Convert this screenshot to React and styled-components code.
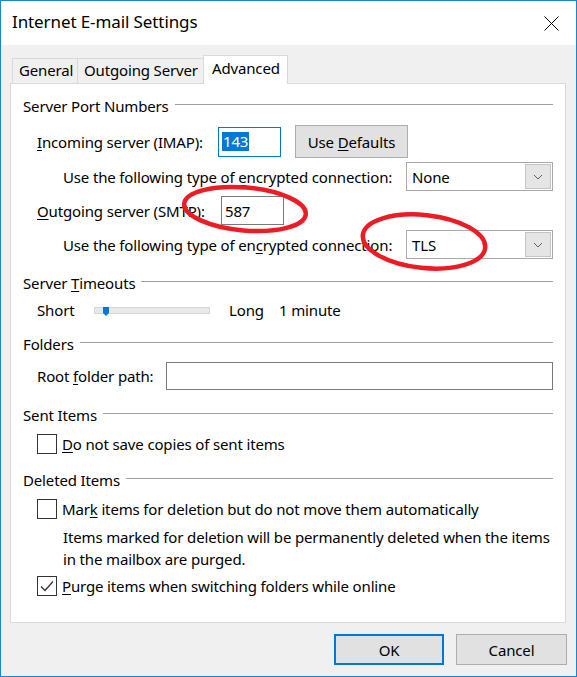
import React from "react";
import styled, { createGlobalStyle } from "styled-components";

const GlobalStyle = createGlobalStyle`
  html, body {
    margin: 0;
    padding: 0;
    background: #ffffff;
  }
  body {
    font-family: "Noto Sans", "Segoe UI", sans-serif;
  }
`;

const Window = styled.div`
  position: relative;
  box-sizing: border-box;
  width: 577px;
  height: 677px;
  border: 1px solid #1883d7;
  background: #f0f0f0;
  display: flex;
  flex-direction: column;
  font-family: "Noto Sans", "Segoe UI", sans-serif;
  font-size: 15px;
  letter-spacing: -0.15px;
  color: #000;
`;

const TitleBar = styled.div`
  height: 44px;
  flex: none;
  background: #fff;
  display: flex;
  align-items: center;
  justify-content: space-between;
  padding: 0 17px 0 11px;
`;

const Title = styled.div`
  font-size: 17px;
  letter-spacing: -0.1px;
  line-height: 24px;
  margin-top: -2px;
`;

const CloseIcon = styled.svg`
  display: block;
  margin-top: 1px;
`;

const Body = styled.div`
  flex: 1;
  display: flex;
  flex-direction: column;
  padding: 10px 10px 0 9px;
`;

const TabRow = styled.div`
  display: flex;
  align-items: flex-end;
  height: 28px;
  padding-left: 2px;
`;

const Tab = styled.div`
  position: relative;
  box-sizing: border-box;
  width: ${({ $w }) => $w}px;
  height: ${({ $active }) => ($active ? 29 : 25)}px;
  margin-left: -1px;
  margin-bottom: ${({ $active }) => ($active ? -1 : 0)}px;
  z-index: ${({ $active }) => ($active ? 1 : 0)};
  border: 1px solid #d9d9d9;
  border-bottom: none;
  background: ${({ $active }) => ($active ? "#fff" : "#f0f0f0")};
  padding-left: ${({ $active }) => ($active ? 8 : 6)}px;
  line-height: ${({ $active }) => ($active ? 24 : 23)}px;
  white-space: nowrap;
  &:first-child {
    margin-left: 0;
  }
`;

const Panel = styled.div`
  box-sizing: border-box;
  height: 540px;
  background: #fff;
  border: 1px solid #d9d9d9;
  padding: 12px 12px 0 12px;
  display: flex;
  flex-direction: column;
`;

const Legend = styled.div`
  display: flex;
  align-items: flex-start;
  height: 20px;
  line-height: 20px;
  margin-top: ${({ $mt }) => $mt || 0}px;
  white-space: nowrap;
  &::after {
    content: "";
    flex: 1;
    height: 1px;
    margin: 8px 0 0 6px;
    background: #a0a0a0;
  }
`;

const Row = styled.div`
  display: flex;
  align-items: center;
  height: ${({ $h }) => $h}px;
  margin-top: ${({ $mt }) => $mt || 0}px;
  padding-left: ${({ $indent }) => $indent}px;
  white-space: nowrap;
`;

const Label = styled.div`
  flex: none;
  width: ${({ $w }) => ($w ? `${$w}px` : "auto")};
`;

const Key = styled.span`
  text-decoration: underline;
  text-underline-offset: 2px;
`;

const TextBox = styled.div`
  box-sizing: border-box;
  flex: ${({ $grow }) => ($grow ? 1 : "none")};
  width: ${({ $w }) => ($w ? `${$w}px` : "auto")};
  height: ${({ $h }) => $h}px;
  border: 1px solid ${({ $focus }) => ($focus ? "#0078d7" : "#7a7a7a")};
  background: #fff;
  padding-left: 3px;
  display: flex;
  align-items: center;
`;

const Selected = styled.span`
  background: #0078d7;
  color: #fff;
  line-height: 19px;
  padding: 0 1px;
`;

const Button = styled.div`
  box-sizing: border-box;
  width: ${({ $w }) => $w}px;
  height: ${({ $h }) => $h}px;
  margin-left: ${({ $ml }) => $ml || 0}px;
  background: #e1e1e1;
  border: ${({ $default }) => ($default ? "2px solid #0078d7" : "1px solid #adadad")};
  display: flex;
  align-items: center;
  justify-content: center;
`;

const Select = styled.div`
  box-sizing: border-box;
  width: 147px;
  height: 29px;
  border: 1px solid #a9a9a9;
  background: #fff;
  display: flex;
  align-items: center;
  justify-content: space-between;
  padding: 0 1px 0 5px;
`;

const DropButton = styled.div`
  box-sizing: border-box;
  width: 26px;
  height: 25px;
  background: #e5e5e5;
  border: 1px solid #c4c4c4;
  display: flex;
  align-items: center;
  justify-content: center;
`;

const Track = styled.div`
  position: relative;
  box-sizing: border-box;
  width: 116px;
  height: 7px;
  margin-right: 19px;
  background: #e7eaea;
  border: 1px solid #d6d6d6;
`;

const Thumb = styled.svg`
  position: absolute;
  left: 8px;
  top: -1px;
`;

const Check = styled.div`
  box-sizing: border-box;
  flex: none;
  width: 20px;
  height: 20px;
  border: 1px solid #333;
  background: #fff;
  margin-right: 5px;
  display: flex;
  align-items: center;
  justify-content: center;
`;

const Note = styled.div`
  margin-top: 7px;
  padding-left: 40px;
  line-height: 22px;
  white-space: nowrap;
`;

const Footer = styled.div`
  display: flex;
  justify-content: flex-end;
  padding-top: 11px;
  margin-right: -1px;
`;

const Annotations = styled.svg`
  position: absolute;
  top: -1px;
  left: -1px;
  pointer-events: none;
`;

const Chevron = () => (
  <svg width="10" height="6" viewBox="0 0 10 6">
    <path d="M1 1 L5 5 L9 1" fill="none" stroke="#606060" strokeWidth="1" />
  </svg>
);

const Dropdown = ({ value }) => (
  <Select>
    <span>{value}</span>
    <DropButton>
      <Chevron />
    </DropButton>
  </Select>
);

const CheckItem = ({ checked, children, mt }) => (
  <Row $h={20} $mt={mt} $indent={14}>
    <Check>
      {checked && (
        <svg width="16" height="14" viewBox="0 0 16 14">
          <path d="M2 7.5 L6 11.5 L14 2.5" fill="none" stroke="#333" strokeWidth="1.3" />
        </svg>
      )}
    </Check>
    <span>{children}</span>
  </Row>
);

export default function App() {
  return (
    <>
      <GlobalStyle />
      <Window>
        <TitleBar>
          <Title>Internet E-mail Settings</Title>
          <CloseIcon width="15" height="15" viewBox="0 0 15 15">
            <path d="M0.5 0.5 L14.5 14.5 M14.5 0.5 L0.5 14.5" stroke="#000" strokeWidth="1" />
          </CloseIcon>
        </TitleBar>
        <Body>
          <TabRow>
            <Tab $w={66}>General</Tab>
            <Tab $w={127}>Outgoing Server</Tab>
            <Tab $w={85} $active>Advanced</Tab>
          </TabRow>
          <Panel>
            <Legend>Server Port Numbers</Legend>
            <Row $h={33} $mt={9} $indent={14}>
              <Label $w={181}>
                <Key>I</Key>ncoming server (IMAP):
              </Label>
              <TextBox $w={63} $h={30} $focus>
                <Selected>143</Selected>
              </TextBox>
              <Button $w={113} $h={33} $ml={14}>
                Use&nbsp;<Key>D</Key>efaults
              </Button>
            </Row>
            <Row $h={29} $mt={4} $indent={40}>
              <Label $w={343}>
                Use the following type of <Key>e</Key>ncrypted connection:
              </Label>
              <Dropdown value="None" />
            </Row>
            <Row $h={29} $mt={5} $indent={14}>
              <Label $w={184}>
                <Key>O</Key>utgoing server (SMTP):
              </Label>
              <TextBox $w={63} $h={29}>
                587
              </TextBox>
            </Row>
            <Row $h={29} $mt={5} $indent={40}>
              <Label $w={343}>
                Use the following type of en<Key>c</Key>rypted connection:
              </Label>
              <Dropdown value="TLS" />
            </Row>

            <Legend $mt={14}>
              Server&nbsp;<Key>T</Key>imeouts
            </Legend>
            <Row $h={20} $mt={7} $indent={14}>
              <Label $w={57}>Short</Label>
              <Track>
                <Thumb width="6" height="9" viewBox="0 0 6 9">
                  <path d="M0 0 H6 V6 L3 9 L0 6 Z" fill="#0078d7" />
                </Thumb>
              </Track>
              <Label $w={50}>Long</Label>
              <Label>1 minute</Label>
            </Row>

            <Legend $mt={14}>Folders</Legend>
            <Row $h={28} $mt={8} $indent={14}>
              <Label $w={129}>
                Root <Key>f</Key>older path:
              </Label>
              <TextBox $grow $h={28} />
            </Row>

            <Legend $mt={15}>Sent Items</Legend>
            <CheckItem mt={9}>
              <Key>D</Key>o not save copies of sent items
            </CheckItem>

            <Legend $mt={16}>Deleted Items</Legend>
            <CheckItem mt={9}>
              Mar<Key>k</Key> items for deletion but do not move them automatically
            </CheckItem>
            <Note>
              Items marked for deletion will be permanently deleted when the items
              <br />
              in the mailbox are purged.
            </Note>
            <CheckItem checked mt={6}>
              <Key>P</Key>urge items when switching folders while online
            </CheckItem>
          </Panel>
          <Footer>
            <Button $w={110} $h={31} $default>
              OK
            </Button>
            <Button $w={111} $h={31} $ml={12}>
              Cancel
            </Button>
          </Footer>
        </Body>
        <Annotations width="577" height="677" viewBox="0 0 577 677">
          <ellipse
            cx="245"
            cy="209"
            rx="61"
            ry="21.5"
            transform="rotate(5 245 209)"
            fill="none"
            stroke="#ed1c24"
            strokeWidth="4.5"
          />
          <ellipse
            cx="424"
            cy="241.5"
            rx="61.5"
            ry="26.5"
            transform="rotate(6 424 241.5)"
            fill="none"
            stroke="#ed1c24"
            strokeWidth="4.5"
          />
        </Annotations>
      </Window>
    </>
  );
}
